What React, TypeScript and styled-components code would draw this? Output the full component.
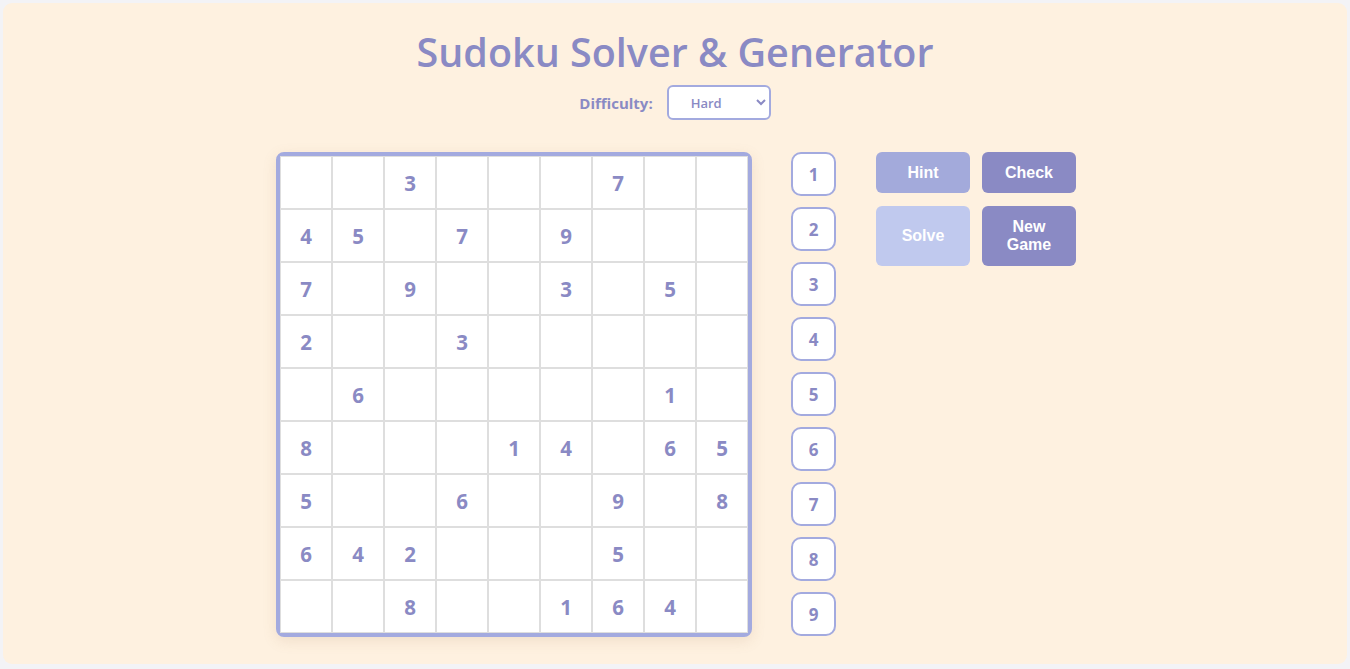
import React, { useState } from 'react'
import styled, { createGlobalStyle } from 'styled-components'

const GlobalStyle = createGlobalStyle`
   html, body {
      margin: 0;
      padding: 0;
      background: #f3f3f6;
   }
   body {
      font-family: 'Open Sans', 'Noto Sans', sans-serif;
   }
`

const Page = styled.div`
   padding: 3px 3px 0 3px;
   height: 669px;
   box-sizing: border-box;
`

const Container = styled.div`
   height: 661px;
   background: #fef1e0;
   border-radius: 9px;
   display: flex;
   flex-direction: column;
   align-items: center;
   box-sizing: border-box;
   padding-top: 24px;
`

const Title = styled.h1`
   margin: 0;
   font-size: 39.5px;
   font-weight: 600;
   line-height: 50px;
   color: #8a8ac4;
   letter-spacing: 0;
`

const DifficultyRow = styled.div`
   display: flex;
   align-items: center;
   gap: 14px;
   margin-top: 8px;
`

const Label = styled.label`
   font-size: 15px;
   font-weight: 700;
   color: #8a8ac4;
`

const Select = styled.select`
   width: 104px;
   height: 35px;
   border: 2px solid #a3aadf;
   border-radius: 6px;
   background: #fff;
   color: #8a8ac4;
   font-family: 'Open Sans', sans-serif;
   font-size: 13px;
   font-weight: 600;
   padding: 0 8px 0 18px;
   outline: none;
`

const Main = styled.div`
   display: flex;
   align-items: flex-start;
   gap: 39px;
   margin-top: 32px;
   padding-left: 2px;
`

const Board = styled.div`
   display: grid;
   grid-template-columns: repeat(9, 52px);
   grid-template-rows: repeat(9, 53px);
   border: 4px solid #a3aadf;
   border-radius: 8px;
   background: #fff;
   box-shadow: 0 4px 14px rgba(160, 120, 80, 0.15);
`

const Cell = styled.div<{ $filled: boolean }>`
   border: 1px solid #dedede;
   display: flex;
   align-items: center;
   justify-content: center;
   font-size: 20.5px;
   font-weight: 700;
   color: #8a8ac4;
   background: #fff;
   cursor: ${p => (p.$filled ? 'default' : 'pointer')};
`

const NumberPad = styled.div`
   display: flex;
   flex-direction: column;
   gap: 11px;
`

const PadButton = styled.button`
   width: 45px;
   height: 44px;
   border: 2px solid #a3aadf;
   border-radius: 10px;
   background: #fff;
   color: #8a8ac4;
   font-family: 'Open Sans', sans-serif;
   font-size: 17px;
   font-weight: 700;
   padding: 0;
   cursor: pointer;
`

const Actions = styled.div`
   display: grid;
   grid-template-columns: repeat(2, 94px);
   grid-template-rows: 41px 60px;
   column-gap: 12px;
   row-gap: 13px;
   margin-left: 1px;
`

const ActionButton = styled.button<{ $bg: string }>`
   border: none;
   border-radius: 6px;
   background: ${p => p.$bg};
   color: #fff;
   font-family: 'Liberation Sans', Arial, sans-serif;
   font-size: 16px;
   font-weight: 700;
   line-height: 18px;
   padding: 0 14px;
   cursor: pointer;
`

const puzzle = [
   [0, 0, 3, 0, 0, 0, 7, 0, 0],
   [4, 5, 0, 7, 0, 9, 0, 0, 0],
   [7, 0, 9, 0, 0, 3, 0, 5, 0],
   [2, 0, 0, 3, 0, 0, 0, 0, 0],
   [0, 6, 0, 0, 0, 0, 0, 1, 0],
   [8, 0, 0, 0, 1, 4, 0, 6, 5],
   [5, 0, 0, 6, 0, 0, 9, 0, 8],
   [6, 4, 2, 0, 0, 0, 5, 0, 0],
   [0, 0, 8, 0, 0, 1, 6, 4, 0],
]

export default function App() {
   const [difficulty, setDifficulty] = useState('hard')
   const [board] = useState(puzzle)

   return (
      <>
         <GlobalStyle />
         <Page>
            <Container>
               <Title>Sudoku Solver &amp; Generator</Title>
               <DifficultyRow>
                  <Label htmlFor="difficulty">Difficulty:</Label>
                  <Select
                     id="difficulty"
                     value={difficulty}
                     onChange={e => setDifficulty(e.target.value)}
                  >
                     <option value="easy">Easy</option>
                     <option value="medium">Medium</option>
                     <option value="hard">Hard</option>
                  </Select>
               </DifficultyRow>
               <Main>
                  <Board>
                     {board.map((row, r) =>
                        row.map((v, c) => (
                           <Cell key={`${r}-${c}`} $filled={v !== 0}>
                              {v !== 0 ? v : ''}
                           </Cell>
                        ))
                     )}
                  </Board>
                  <NumberPad>
                     {[1, 2, 3, 4, 5, 6, 7, 8, 9].map(n => (
                        <PadButton key={n}>{n}</PadButton>
                     ))}
                  </NumberPad>
                  <Actions>
                     <ActionButton $bg="#a3aadb">Hint</ActionButton>
                     <ActionButton $bg="#8a8ac4">Check</ActionButton>
                     <ActionButton $bg="#c0c9ee">Solve</ActionButton>
                     <ActionButton $bg="#8a8ac4">New Game</ActionButton>
                  </Actions>
               </Main>
            </Container>
         </Page>
      </>
   )
}
